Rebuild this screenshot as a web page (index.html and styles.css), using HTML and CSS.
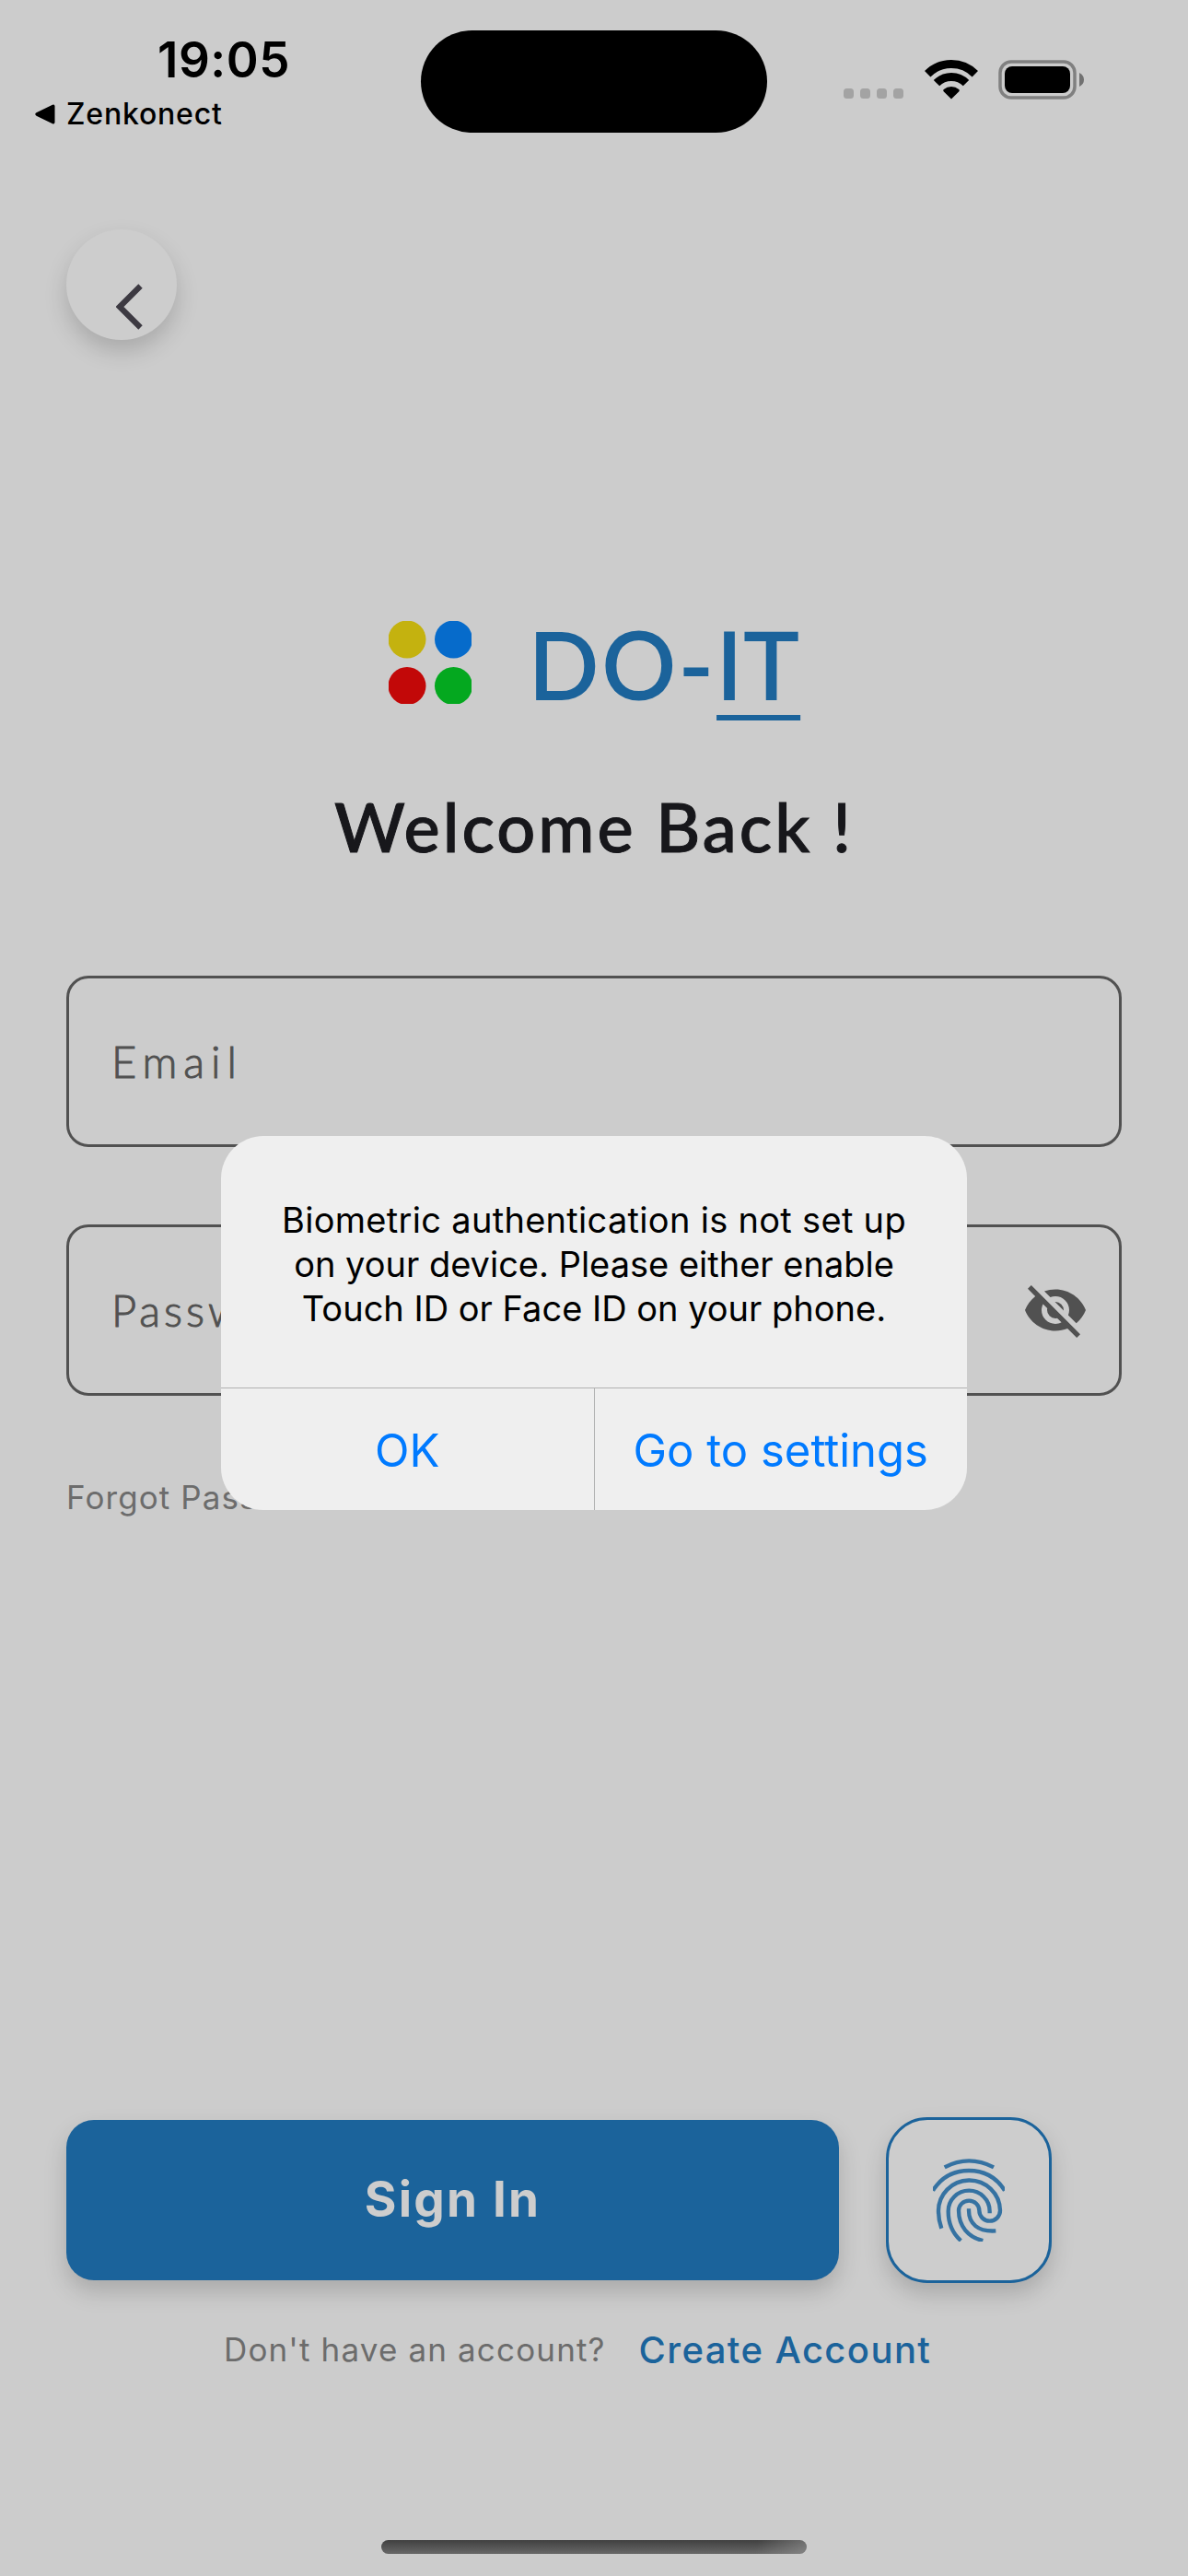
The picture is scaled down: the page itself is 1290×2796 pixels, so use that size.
FILE: index.html
```html
<!DOCTYPE html>
<html lang="en">
<head>
<meta charset="utf-8">
<title>DO-IT Sign In</title>
<link rel="stylesheet" href="styles.css">
</head>
<body>
<div class="screen">
  <header class="status">
    <div class="status-left">
      <div class="time">19:05</div>
      <div class="return">
        <svg width="22" height="22" viewBox="0 0 22 22"><path d="M1.5 9.3 19 .8Q21.5 0 21.5 2.5V19.5Q21.5 22 19 21.2L1.5 12.7Q-1 11 1.5 9.3Z"/></svg>
        <span class="return-app">Zenkonect</span>
      </div>
    </div>
    <div class="island"></div>
    <div class="status-icons">
      <div class="cell"><i></i><i></i><i></i><i></i></div>
      <svg class="wifi" width="58" height="43" viewBox="0 0 58 43">
        <g fill="none" stroke="#000" stroke-width="9">
          <path d="M3.2 15.2A36.5 36.5 0 0 1 54.8 15.2"/>
          <path d="M13 25.2A22.5 22.5 0 0 1 45 25.2"/>
        </g>
        <path d="M29 42.500 20.600 34.200Q19.600 33 20.800 32A12.500 12.500 0 0 1 37.200 32Q38.400 33 37.400 34.200Z"/>
      </svg>
      <svg class="battery" width="94" height="43" viewBox="0 0 94 43">
        <rect x="2" y="2" width="81" height="39" rx="12" fill="none" stroke="#808080" stroke-width="3.500"/>
        <rect x="7" y="7" width="71" height="29" rx="8"/>
        <path d="M88 14Q93 16.500 93 21.500T88 29Z" fill="#717171"/>
      </svg>
    </div>
  </header>

  <button class="back" aria-label="Back">
    <svg width="30" height="50" viewBox="0 0 30 50"><path d="M26.500 2.500 4 25 26.500 47.500" fill="none" stroke="#3d3a42" stroke-width="6.200"/></svg>
  </button>

  <div class="brand">
    <svg width="90" height="90" viewBox="0 0 90 90">
      <circle cx="20" cy="20" r="20.500" fill="#c4b20f"/>
      <circle cx="70.500" cy="20" r="20.500" fill="#066bcb"/>
      <circle cx="20" cy="70.500" r="20.500" fill="#c20808"/>
      <circle cx="70.500" cy="70.500" r="20.500" fill="#04a81f"/>
    </svg>
    <div class="brand-name">DO-<span class="it">IT</span></div>
  </div>
  <h1 class="welcome">Welcome Back !</h1>

  <form class="fields">
    <div class="field email">Email</div>
    <div class="field">
      <span>Password</span>
      <svg width="72" height="72" viewBox="0 0 24 24" fill="#515151"><path d="M11.830 9 15 12.160V12A3 3 0 0 0 12 9H11.830M7.530 9.800 9.080 11.350C9.030 11.560 9 11.770 9 12A3 3 0 0 0 12 15C12.220 15 12.440 14.970 12.650 14.920L14.200 16.450C13.530 16.780 12.790 17 12 17A5 5 0 0 1 7 12C7 11.210 7.200 10.470 7.530 9.800M2 4.270 4.280 6.550 4.730 7C3.080 8.300 1.780 10 1 12C2.730 16.390 7 19.500 12 19.500C13.550 19.500 15.030 19.200 16.380 18.660L16.810 19.080 19.730 22 21 20.730 3.270 3M12 7A5 5 0 0 1 17 12C17 12.640 16.870 13.260 16.640 13.820L19.570 16.750C21.070 15.500 22.270 13.860 23 12C21.270 7.610 17 4.500 12 4.500C10.600 4.500 9.260 4.750 8 5.200L10.170 7.350C10.740 7.130 11.350 7 12 7Z"/></svg>
    </div>
  </form>
  <div class="forgot">Forgot Password?</div>

  <div class="actions">
    <button class="signin">Sign In</button>
    <button class="bio" aria-label="Use fingerprint">
      <svg width="78" height="90" viewBox="219 189 234 270" fill="none" stroke="#1b639b" stroke-width="13">
        <path d="M257 217Q336 175 417 217"/>
        <path d="M219 293C246 250 288 228 336 228S426 250 453 293"/>
        <path d="M247 416Q237 388 237 361A100.500 100 0 0 1 438 358A34 34 0 0 1 370 358A33.500 32 0 0 0 303 358C303 410 335 445 382 456"/>
        <path d="M404 367V360A67.500 67 0 0 0 269 360C269 400 283 432 310 456"/>
        <path d="M336 352V358C336 400 365 428 424 424"/>
      </svg>
    </button>
  </div>
  <div class="signup">
    <span class="question">Don't have an account?</span>
    <a class="create">Create Account</a>
  </div>
  <div class="home"></div>

  <div class="dialog" role="alertdialog">
    <p class="message"><span class="lead">Biometric authentication is not set up</span><br>on your device. Please either enable<br>Touch ID or Face ID on your phone.</p>
    <div class="choices">
      <button class="choice ok">OK</button>
      <button class="choice go">Go to settings</button>
    </div>
  </div>
</div>
</body>
</html>
```
FILE: styles.css
```css
* { box-sizing: border-box; }
body { margin: 0; background: #ccc; }
button { appearance: none; border: 0; padding: 0; margin: 0; font: inherit; }
svg { display: block; flex: none; }

.screen {
  position: relative;
  width: 1290px;
  height: 2796px;
  background: #ccc;
  overflow: hidden;
  display: flex;
  flex-direction: column;
  align-items: flex-start;
  font-family: Inter, "Liberation Sans", sans-serif;
  white-space: nowrap;
}

.status { display: flex; width: 100%; height: 249px; padding-top: 33px; }
.status-left { width: 457px; }
.time { margin: 2px 0 0 171px; font-size: 53px; line-height: 60px; font-weight: 600; letter-spacing: 0.5px; }
.return { display: flex; align-items: center; gap: 12px; margin: 8px 0 0 38px; height: 41px; }
.return-app { font-size: 32px; line-height: 41px; font-weight: 500; letter-spacing: 0.8px; }
.island { width: 376px; height: 111px; border-radius: 56px; background: #000; }
.status-icons { display: flex; align-items: flex-start; padding: 32px 0 0 83px; }
.cell { display: flex; gap: 7px; margin: 31px 23px 0 0; }
.cell i { width: 11px; height: 11px; border-radius: 3.5px; background: #a3a3a3; }
.battery { margin-left: 22px; }

.back {
  display: flex;
  align-items: flex-start;
  width: 120px;
  height: 120px;
  margin-left: 72px;
  padding: 59px 0 0 54px;
  border-radius: 50%;
  background: #cdcdcd;
  box-shadow: 0 12px 24px rgba(0, 0, 0, 0.17);
}

.brand { display: flex; align-items: center; height: 90px; margin: 305px 0 0 422px; gap: 62px; }
.brand-name { padding-top: 2px; font-family: Lato, sans-serif; font-size: 100px; line-height: 90px; font-weight: 400; letter-spacing: 3.6px; color: #1b639b; -webkit-text-stroke: 2px #1b639b; }
.it { letter-spacing: 2px; text-decoration: underline; text-decoration-thickness: 6px; text-underline-offset: 17px; }
.welcome {
  align-self: center;
  margin: 93px 0 0;
  font-family: Lato, sans-serif;
  font-size: 74px;
  line-height: 80px;
  font-weight: 500;
  letter-spacing: 3px;
  color: #17171b;
  -webkit-text-stroke: 1px #17171b;
}

.fields { display: flex; flex-direction: column; gap: 84px; width: 1146px; margin: 122px 0 0 72px; }
.field {
  display: flex;
  align-items: center;
  justify-content: space-between;
  height: 186px;
  padding: 0 33px 0 46px;
  border: 3px solid #515151;
  border-radius: 24px;
  font-family: Lato, sans-serif;
  font-size: 47px;
  font-weight: 300;
  letter-spacing: 4px;
  color: #515151;
  -webkit-text-stroke: 1px #515151;
}
.email { letter-spacing: 7px; }
.forgot { margin: 90px 0 0 72px; font-size: 35px; line-height: 40px; letter-spacing: 1.1px; color: #6c6c6c; }

.actions { display: flex; align-items: center; gap: 51px; margin: 653px 0 0 72px; }
.signin {
  width: 839px;
  height: 174px;
  padding-bottom: 3px;
  border-radius: 30px;
  background: #1b639b;
  color: #cdcdcd;
  font-size: 53px;
  font-weight: 700;
  letter-spacing: 2.2px;
  box-shadow: 0 12px 24px rgba(0, 0, 0, 0.17);
}
.bio {
  display: grid;
  place-items: center;
  width: 180px;
  height: 180px;
  border: 3px solid #1b639b;
  border-radius: 45px;
  background: #cdcdcd;
  box-shadow: 0 12px 24px rgba(0, 0, 0, 0.17);
}
.bio svg { opacity: 0.85; }
.signup { display: flex; align-items: center; gap: 36px; height: 40px; margin: 52px 0 0 243px; }
.question { font-size: 35px; letter-spacing: 1.15px; color: #6c6c6c; }
.create { font-size: 40px; font-weight: 500; letter-spacing: 1.4px; color: #1b639b; }
.home {
  width: 462px;
  height: 15px;
  margin: 187px 0 0 414px;
  border-radius: 8px;
  background: linear-gradient(100deg, transparent 88%, rgba(160, 160, 160, 0.5)), linear-gradient(#404040, #686868);
}

.dialog {
  position: absolute;
  left: 240px;
  top: 1233px;
  width: 810px;
  height: 406px;
  border-radius: 46px;
  background: #efefef;
  overflow: hidden;
  display: flex;
  flex-direction: column;
}
.message { flex: 1; margin: 0; padding-top: 67px; text-align: center; font-size: 38px; line-height: 48px; color: #000; }
.lead { letter-spacing: 0.3px; }
.choices { display: flex; height: 133px; border-top: 1px solid #b0b1b1; }
.choice { flex: 1; padding-top: 2px; background: none; color: #007aff; font-size: 49px; }
.go { border-left: 1px solid #b0b1b1; }
```
